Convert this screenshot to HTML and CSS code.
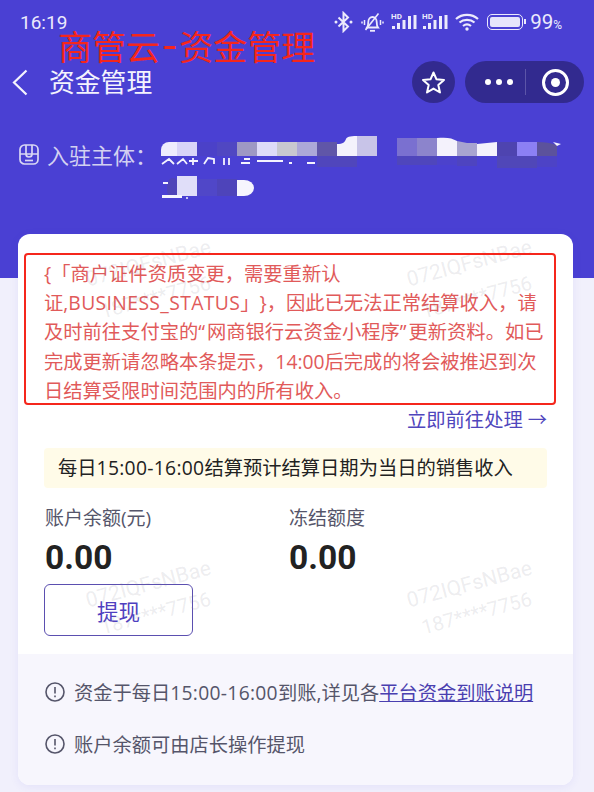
FILE: index.html
```html
<!DOCTYPE html>
<html lang="zh-CN">
<head>
    <meta charset="UTF-8">
    <meta name="viewport" content="width=device-width, initial-scale=1.0">
    <title>资金管理</title>
    <link rel="stylesheet" href="styles.css">
</head>
<body>
    <div class="screen">
        <header class="top">
            <div class="status-bar">
                <span class="clock">16:19</span>
                <div class="status-icons">
                    <svg class="ic-bt" width="19" height="22" viewBox="0 0 19 22" fill="none" stroke="#eceafc" stroke-width="2"><path d="M4.500 6.500 14 15.500 9.500 20V2L14 6.500 4.500 15.500"/><circle cx="2" cy="11" r="1.500" fill="#eceafc" stroke="none"/><circle cx="17" cy="11" r="1.500" fill="#eceafc" stroke="none"/></svg>
                    <svg class="ic-bell" width="23" height="21" viewBox="0 0 23 21" fill="none" stroke="#eceafc" stroke-width="1.800"><path d="M6 15.500c1.200-1.500 1.300-3 1.300-5.500 0-3 2-5 4.200-5s4.200 2 4.200 5c0 2.500.1 4 1.300 5.500z"/><path d="M9 18.800h5"/><path d="M4.500 18 17.500 1.500" stroke-width="1.600"/><path d="M3.500 8v5M1 9.500v2M19.500 8v5M22 9.500v2" stroke-width="1.500"/></svg>
                    <svg class="ic-sig" width="26" height="20" viewBox="0 0 26 20" fill="#eceafc"><text x="0" y="6.500" class="hd-text">HD</text><rect x="1" y="14" width="3" height="3"/><rect x="6" y="11" width="3" height="6"/><rect x="11.500" y="8" width="3" height="9"/><rect x="17" y="4" width="3" height="13"/><rect x="22.500" y="3" width="3" height="14"/></svg>
                    <svg class="ic-sig" width="26" height="20" viewBox="0 0 26 20" fill="#eceafc"><text x="0" y="6.500" class="hd-text">HD</text><rect x="1" y="14" width="3" height="3"/><rect x="6" y="11" width="3" height="6"/><rect x="11.500" y="8" width="3" height="9"/><rect x="17" y="4" width="3" height="13"/><rect x="22.500" y="3" width="3" height="14"/></svg>
                    <svg class="ic-wifi" width="24" height="20" viewBox="0 0 24 20" fill="none" stroke="#eceafc" stroke-width="2.200"><path d="M1 7c6-5.500 16-5.500 22 0"/><path d="M4.500 10.500c4-3.500 11-3.500 15 0"/><path d="M8 14c2.300-1.800 5.700-1.800 8 0"/><circle cx="12" cy="17" r="1.700" fill="#eceafc" stroke="none"/></svg>
                    <div class="battery"><span class="battery-fill"></span></div>
                    <span class="battery-pct">99<small>%</small></span>
                </div>
            </div>
            <nav class="nav-bar">
                <svg class="back" width="16" height="27" viewBox="0 0 16 27" fill="none" stroke="#f4f3fd" stroke-width="2.200"><path d="M14.500 1.500 2 13.500 14.500 25.500"/></svg>
                <span class="nav-title">资金管理</span>
                <div class="nav-actions">
                    <div class="star-btn">
                        <svg width="25" height="25" viewBox="0 0 25 25" fill="none" stroke="#fff" stroke-width="2" stroke-linejoin="round"><path d="M12.500 2.500 15.500 9.300 23 10 17.300 15 19 22.500 12.500 18.600 6 22.500 7.700 15 2 10 9.500 9.300z"/></svg>
                    </div>
                    <div class="capsule">
                        <div class="dots"><i></i><i></i><i></i></div>
                        <span class="capsule-line"></span>
                        <div class="target"><i></i></div>
                    </div>
                </div>
            </nav>
            <div class="entity-row">
                <svg class="shop-icon" width="20" height="21" viewBox="0 0 20 21" fill="none" stroke="#d9d7f4" stroke-width="1.700"><rect x="1" y="1" width="18" height="19" rx="4.500"/><path d="M1 10h18M7 1v9M13 1v9"/><path d="M7 10a3 3 0 0 0 6 0"/><path d="M6 16.500h8"/></svg>
                <span class="entity-label">入驻主体：</span>
                <!-- blurred-out company name -->
                <svg class="mosaic" width="404" height="64" viewBox="0 0 404 64">
                    <path d="M0 20V14a8 8 0 0 1 8-8h8v14z" fill="#eeecfd"/>
                    <rect x="16" y="6" width="20" height="14" fill="#d8d4f8"/>
                    <rect x="36" y="6" width="20" height="14" fill="#4b41c8"/>
                    <rect x="56" y="6" width="20" height="14" fill="#5047c2"/>
                    <rect x="76" y="6" width="20" height="14" fill="#9e98c4"/>
                    <rect x="96" y="6" width="20" height="14" fill="#dedbf8"/>
                    <rect x="116" y="6" width="20" height="14" fill="#c8c8d0"/>
                    <rect x="136" y="6" width="20" height="14" fill="#aca8d8"/>
                    <rect x="156" y="6" width="20" height="14" fill="#6056a8"/>
                    <path d="M176 20V8c6 0 8-2 9-5 1-2 3-3 11-3v20z" fill="#f4f2fc"/>
                    <rect x="196" y="0" width="20" height="20" fill="#c8c4e8"/>
                    <rect x="236" y="2" width="20" height="18" fill="#7a70d0"/>
                    <rect x="256" y="2" width="20" height="18" fill="#8c84cc"/>
                    <path d="M276 20V2c10-1 15 0 20 3v15z" fill="#f4f2fc"/>
                    <path d="M296 20V5l10 2 10 0v13z" fill="#a8a4d0"/>
                    <path d="M316 20V8l20-2v14z" fill="#f4f2fc"/>
                    <rect x="336" y="6" width="20" height="14" fill="#4e44b0"/>
                    <rect x="356" y="6" width="20" height="14" fill="#8c80f4"/>
                    <path d="M376 20V6c8 0 14 1 20 3v11z" fill="#5c529c"/>
                    <rect x="156" y="20" width="40" height="11" fill="#5046bc"/>
                    <rect x="236" y="20" width="40" height="9" fill="#4f46bc"/>
                    <rect x="276" y="20" width="20" height="9" fill="#4c42cc"/>
                    <rect x="296" y="20" width="20" height="10" fill="#4e44c0"/>
                    <rect x="336" y="20" width="40" height="12" fill="#5047b8"/>
                    <rect x="376" y="20" width="20" height="11" fill="#4d43c6"/>
                    <path d="M1 28 8 23l5 5M16 28l6-5 4 5M32 22v7M28 25h9M43 28l4-6 6 1v5M63 22v7M68 22v7M80 27h9M83 23h6M96 25h26M128 27h3M146 27h8" fill="none" stroke="#f4f3fe" stroke-width="1.800"/>
                    <path d="M392 6l8 2-4 2z" fill="#f4f3fe"/>
                    <rect x="6" y="42" width="12" height="20" rx="8" fill="#4f45b8"/>
                    <rect x="16" y="40" width="20" height="20" fill="#e0def9"/>
                    <rect x="36" y="43" width="20" height="17" fill="#5047c8"/>
                    <rect x="56" y="43" width="20" height="17" fill="#4e44ba"/>
                    <path d="M76 44h7a10 8 0 0 1 10 8 10 8 0 0 1-10 8h-7z" fill="#f6f5fe"/>
                    <rect x="2" y="46" width="5" height="2" fill="#f4f3fe"/>
                    <rect x="1" y="59" width="20" height="3" fill="#f6f5fe"/>
                    <circle cx="26" cy="62" r="1" fill="#f6f5fe"/>
                </svg>
            </div>
        </header>

        <main class="card">
            <div class="card-body">
                <p class="notice">{「商户证件资质变更，需要重新认<br>证,<span class="latin">BUSINESS_STATUS</span>」}，因此已无法正常结算收入，请<br>及时前往支付宝的<span class="quote">“</span>网商银行云资金小程序<span class="quote">”</span>更新资料。如已<br>完成更新请忽略本条提示，14:00后完成的将会被推迟到次<br>日结算受限时间范围内的所有收入。</p>
                <a class="go-link">立即前往处理 →</a>
                <div class="tip-bar">每日<span class="num">15:00-16:00</span>结算预计结算日期为当日的销售收入</div>
                <div class="amounts">
                    <div class="amount">
                        <div class="amount-label">账户余额(元)</div>
                        <div class="amount-value">0.00</div>
                    </div>
                    <div class="amount">
                        <div class="amount-label">冻结额度</div>
                        <div class="amount-value">0.00</div>
                    </div>
                </div>
                <button class="withdraw">提现</button>
            </div>
            <div class="card-notes">
                <div class="note">
                    <svg width="20" height="20" viewBox="0 0 20 20" fill="none" stroke="#55556a" stroke-width="1.600"><circle cx="10" cy="10" r="9"/><path d="M10 5v6.500M10 13.500v1.800"/></svg>
                    <span>资金于每日<span class="num">15:00-16:00</span>到账,详见各<a class="note-link">平台资金到账说明</a></span>
                </div>
                <div class="note">
                    <svg width="20" height="20" viewBox="0 0 20 20" fill="none" stroke="#55556a" stroke-width="1.600"><circle cx="10" cy="10" r="9"/><path d="M10 5v6.500M10 13.500v1.800"/></svg>
                    <span>账户余额可由店长操作提现</span>
                </div>
            </div>
        </main>

        <!-- watermark + red annotation sit over the page -->
        <span class="mark mark-a1">072IQFsNBae</span>
        <span class="mark mark-a2">187****7756</span>
        <span class="mark mark-b1">072IQFsNBae</span>
        <span class="mark mark-b2">187****7756</span>
        <span class="mark mark-c1">072IQFsNBae</span>
        <span class="mark mark-c2">187****7756</span>
        <span class="mark mark-d1">072IQFsNBae</span>
        <span class="mark mark-d2">187****7756</span>
        <div class="annot-title">商管云<span class="annot-dash">-</span>资金管理</div>
        <div class="annot-box"></div>
    </div>
</body>
</html>
```

FILE: styles.css
```css
* {
    box-sizing: border-box;
}
body {
    margin: 0;
    font-family: "Open Sans", "Noto Sans CJK SC", sans-serif;
    background-color: #f1f0fc;
}
.screen {
    position: relative;
    width: 594px;
    height: 792px;
    overflow: hidden;
    background-color: #f1f0fc;
}
.top {
    height: 278px;
    padding-top: 10px;
    background-color: #4a40d3;
}
.status-bar {
    display: flex;
    justify-content: space-between;
    align-items: center;
    height: 24px;
    padding: 0 32px 0 20px;
}
.clock {
    font-family: Roboto, sans-serif;
    font-size: 19px;
    color: #eceafc;
}
.status-icons {
    display: flex;
    align-items: center;
    gap: 5px;
}
.ic-bt {
    margin-right: 3px;
}
.ic-bell {
    margin-right: 2px;
}
.ic-wifi {
    margin-left: 2px;
}
.hd-text {
    font-family: Roboto, sans-serif;
    font-size: 8px;
    font-weight: 700;
}
.battery {
    position: relative;
    width: 36px;
    height: 16px;
    margin-left: 3px;
    padding: 2px;
    border: 1.500px solid #eceafc;
    border-radius: 5px;
}
.battery::after {
    content: "";
    position: absolute;
    right: -4px;
    top: 4px;
    width: 2px;
    height: 5px;
    background-color: #eceafc;
}
.battery-fill {
    display: block;
    height: 100%;
    background-color: #e6e4fb;
    border-radius: 2px;
}
.battery-pct {
    margin-left: 2px;
    font-family: Roboto, sans-serif;
    font-size: 20.500px;
    color: #eceafc;
}
.battery-pct small {
    font-size: 12px;
}
.nav-bar {
    display: flex;
    align-items: center;
    height: 42px;
    margin-top: 27px;
    padding: 0 10px 0 12px;
}
.nav-title {
    margin-left: 21px;
    font-size: 25.800px;
    line-height: 30px;
    color: #f4f3fd;
}
.nav-actions {
    display: flex;
    gap: 10px;
    margin-left: auto;
}
.star-btn {
    display: flex;
    justify-content: center;
    align-items: center;
    width: 43px;
    height: 42px;
    border-radius: 50%;
    background-color: #322a8f;
}
.capsule {
    display: flex;
    align-items: center;
    width: 119px;
    height: 42px;
    padding-left: 20px;
    border-radius: 21px;
    background-color: #322a8f;
}
.dots {
    display: flex;
    gap: 5px;
}
.dots i {
    width: 6px;
    height: 6px;
    border-radius: 50%;
    background-color: #fff;
}
.capsule-line {
    width: 1px;
    height: 26px;
    margin-left: 12px;
    background-color: #5c55a8;
}
.target {
    display: flex;
    justify-content: center;
    align-items: center;
    width: 27px;
    height: 27px;
    margin-left: 16px;
    border: 3px solid #fff;
    border-radius: 50%;
}
.target i {
    width: 9px;
    height: 9px;
    border-radius: 50%;
    background-color: #fff;
}
.entity-row {
    display: flex;
    align-items: flex-start;
    height: 64px;
    margin-top: 33px;
    padding-left: 19px;
}
.shop-icon {
    margin-top: 8px;
}
.entity-label {
    width: 114px;
    margin-left: 8px;
    font-size: 22px;
    line-height: 38px;
    color: #d3d1f1;
    white-space: nowrap;
}
.card {
    position: relative;
    width: 555px;
    height: 551px;
    margin: -44px 0 0 18px;
    border-radius: 12px;
    background-color: #fff;
    box-shadow: 0 2px 10px rgba(74, 64, 211, 0.08);
    overflow: hidden;
}
.card-body {
    height: 420px;
    padding: 25px 26px 0;
}
.notice {
    margin: 0;
    font-size: 19.300px;
    line-height: 29.200px;
    color: #e15a5a;
    text-spacing-trim: space-all;
    white-space: nowrap;
}
.latin {
    letter-spacing: 0.4px;
}
.quote {
    letter-spacing: 2px;
}
.num {
    letter-spacing: 0.3px;
}
.go-link {
    display: block;
    font-size: 19.300px;
    line-height: 29px;
    text-align: right;
    color: #4f46bd;
}
.tip-bar {
    height: 40px;
    margin-top: 14px;
    padding-left: 14px;
    font-size: 19.300px;
    line-height: 40px;
    color: #222;
    background-color: #fffbe8;
    border-radius: 4px;
}
.amounts {
    display: flex;
    margin-top: 15px;
    padding-left: 1px;
}
.amount {
    width: 244px;
}
.amount-label {
    font-size: 19px;
    line-height: 30px;
    color: #55556a;
}
.amount-value {
    margin-top: 5px;
    font-family: Roboto, sans-serif;
    font-size: 33.500px;
    line-height: 40px;
    font-weight: 700;
    color: #222;
}
.withdraw {
    display: block;
    width: 149px;
    height: 52px;
    margin-top: 6px;
    border: 1px solid #5b4fb0;
    border-radius: 6px;
    font-family: inherit;
    font-size: 21.500px;
    color: #4f3fc0;
    background-color: #fff;
}
.card-notes {
    height: 131px;
    padding: 24px 27px 0;
    background-color: #f7f6fd;
}
.note {
    display: flex;
    align-items: center;
    gap: 9px;
    height: 28px;
    margin-bottom: 24px;
    font-size: 19.250px;
    color: #55556a;
}
.note-link {
    color: #4a3fb0;
    text-decoration: underline;
}
.mark {
    position: absolute;
    font-family: Roboto, sans-serif;
    font-size: 21px;
    line-height: 26px;
    color: rgba(120, 120, 140, 0.14);
    transform: rotate(-15deg);
    white-space: nowrap;
    pointer-events: none;
}
.mark-a1 { left: 84px; top: 250px; }
.mark-a2 { left: 99px; top: 284px; font-size: 20px; }
.mark-b1 { left: 405px; top: 250px; }
.mark-b2 { left: 420px; top: 284px; font-size: 20px; }
.mark-c1 { left: 84px; top: 571px; }
.mark-c2 { left: 99px; top: 600px; font-size: 20px; }
.mark-d1 { left: 405px; top: 571px; }
.mark-d2 { left: 420px; top: 600px; font-size: 20px; }
.annot-title {
    position: absolute;
    left: 58px;
    top: 29px;
    font-family: "Noto Sans CJK SC", sans-serif;
    font-size: 34px;
    line-height: 34px;
    color: #f5261c;
    white-space: nowrap;
}
.annot-dash {
    margin: 0 2px;
    font-size: 44px;
    line-height: 0;
}
.annot-box {
    position: absolute;
    left: 24px;
    top: 253px;
    width: 532px;
    height: 152px;
    border: 2.500px solid #f5261c;
    border-radius: 4px;
}
```
